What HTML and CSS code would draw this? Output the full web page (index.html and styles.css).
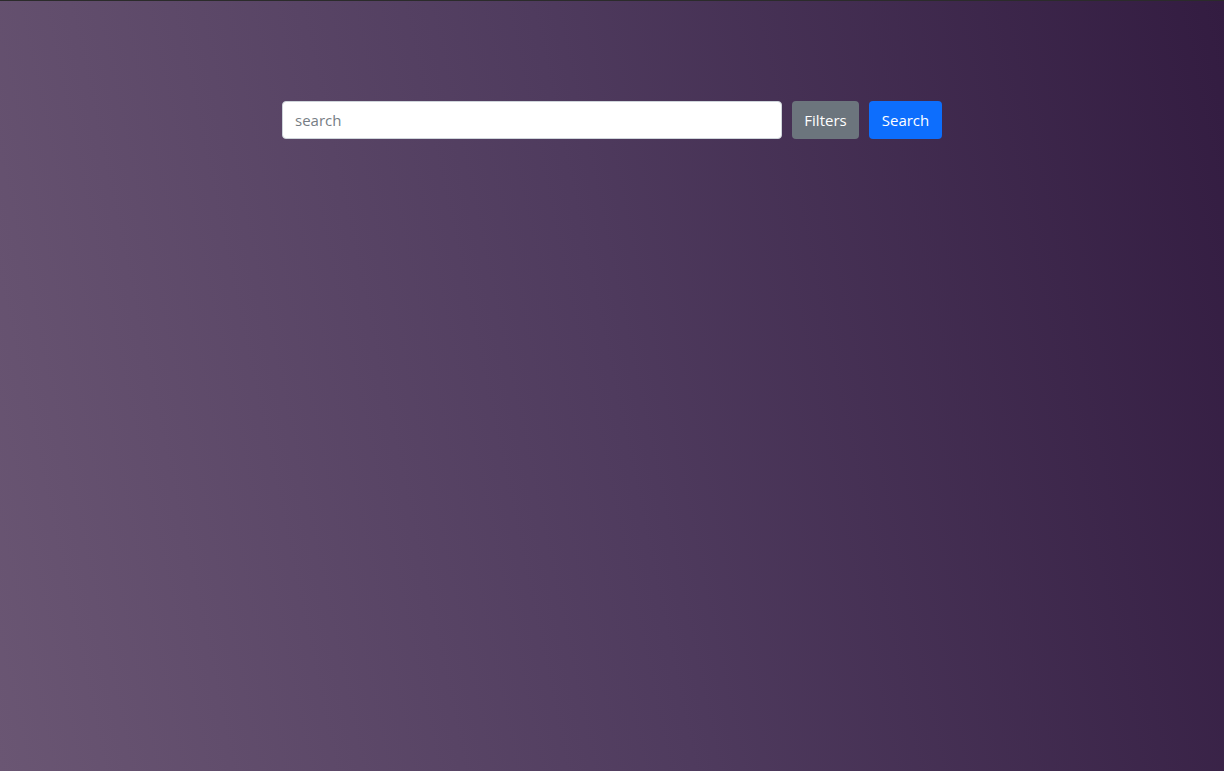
FILE: index.html
```html
<!DOCTYPE html>
<html lang="en">
<head>
<meta charset="utf-8">
<title>Search</title>
<link rel="stylesheet" href="styles.css">
</head>
<body>
<main class="page">
  <form class="search-bar">
    <input class="search-input" type="text" placeholder="search">
    <button type="button" class="btn btn-secondary">Filters</button>
    <button type="submit" class="btn btn-primary">Search</button>
  </form>
</main>
</body>
</html>
```
FILE: styles.css
```css
html, body {
  margin: 0;
  padding: 0;
  height: 100%;
}
body {
  font-family: "Open Sans", "Noto Sans", sans-serif;
  border-top: 1px solid #2b2b2b;
  box-sizing: border-box;
  background: linear-gradient(78deg, #6a5673 0%, #4f3b5e 50%, #331c41 100%);
  min-height: 771px;
}
.page {
  display: flex;
  justify-content: center;
  padding-top: 100px;
}
.search-bar {
  display: flex;
  gap: 10px;
}
.search-input {
  box-sizing: border-box;
  width: 500px;
  height: 38px;
  padding: 6px 12px;
  font-family: inherit;
  font-size: 15px;
  color: #212529;
  background: #fff;
  border: 1px solid #ced4da;
  border-radius: 4px;
  outline: none;
}
.search-input::placeholder {
  color: #767d84;
}
.btn {
  box-sizing: border-box;
  height: 38px;
  padding: 0;
  font-family: inherit;
  font-size: 15px;
  color: #fff;
  border: none;
  border-radius: 4px;
  cursor: pointer;
}
.btn-secondary {
  width: 67px;
  background: #6c757d;
}
.btn-primary {
  width: 73px;
  background: #0d6efd;
}
```
